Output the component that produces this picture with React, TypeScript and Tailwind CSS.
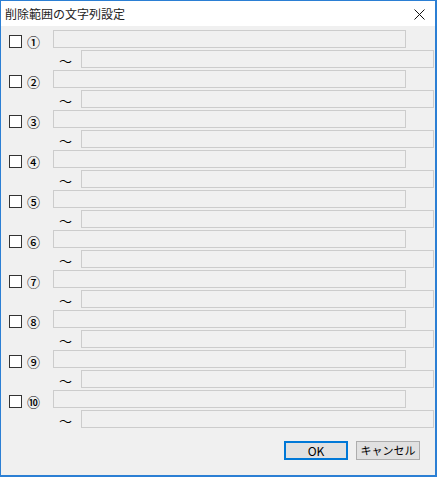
import { useState } from "react";

const marks = ["①", "②", "③", "④", "⑤", "⑥", "⑦", "⑧", "⑨", "⑩"];

const RangeRow = ({ mark }: { mark: string }) => {
  const [checked, setChecked] = useState(false);

  return (
    <div className="flex flex-col gap-[2px]">
      <div className="flex items-center h-[18px]">
        <button
          onClick={() => setChecked(!checked)}
          className="ml-[8px] w-[13px] h-[13px] border border-[#333333] bg-white mt-[5px] text-[10px] leading-none"
        >
          {checked ? "✓" : ""}
        </button>
        <span className="ml-[5px] w-[26px] text-[13px] font-medium leading-none text-black mt-[4px]">
          {mark}
        </span>
        <div className="w-[353px] h-[18px] border border-[#cccccc] bg-[#f0f0f0]" />
      </div>
      <div className="flex items-center h-[18px]">
        <span className="ml-[58px] w-[22px] text-[13px] leading-none text-black mt-[2px]">
          〜
        </span>
        <div className="w-[353px] h-[18px] border border-[#cccccc] bg-[#f0f0f0]" />
      </div>
    </div>
  );
};

export default function App() {
  return (
    <div
      className="w-[437px] h-[477px] flex flex-col border-t border-l border-b-2 border-r-2 border-[#2b7fd4] bg-[#f0f0f0]"
      style={{ fontFamily: '"Noto Sans CJK JP", "Liberation Sans", sans-serif' }}
    >
      {/* title bar */}
      <div className="h-[25px] bg-white flex items-center justify-between shrink-0">
        <span className="ml-[4px] text-[12px] text-[#222222] mt-[1px]">
          削除範囲の文字列設定
        </span>
        <svg width="11" height="11" viewBox="0 0 11 11" className="mr-[10px] mt-[1px]">
          <path d="M0.5 0.5 L10.5 10.5 M10.5 0.5 L0.5 10.5" stroke="#111111" strokeWidth="1" />
        </svg>
      </div>

      <div className="flex flex-col gap-[2px] pt-[4px]">
        {marks.map((m) => (
          <RangeRow key={m} mark={m} />
        ))}
      </div>

      <div className="flex justify-end gap-[8px] mt-[13px] mr-[15px]">
        <button className="w-[64px] h-[19px] border-2 border-[#0078d7] bg-[#e1e1e1] text-[12px] leading-none text-black">
          OK
        </button>
        <button className="w-[64px] h-[19px] border border-[#adadad] bg-[#e1e1e1] text-[11px] leading-none text-black">
          キャンセル
        </button>
      </div>
    </div>
  );
}
